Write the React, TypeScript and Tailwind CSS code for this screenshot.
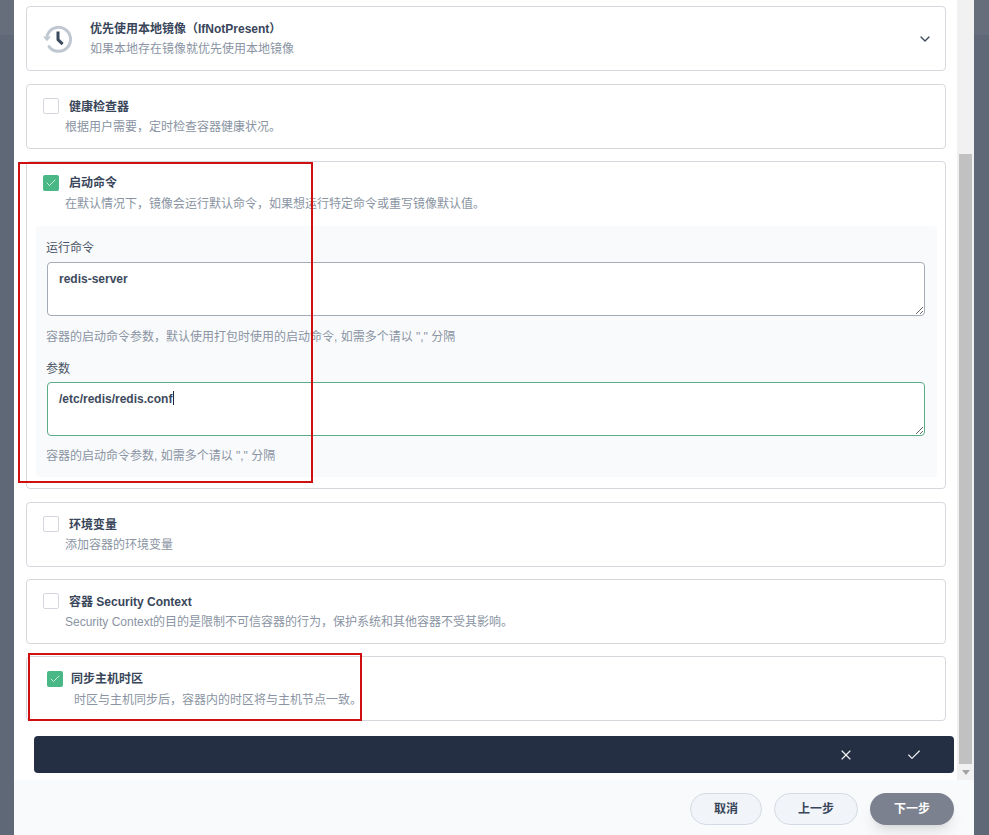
import { Check, ChevronDown, X } from 'lucide-react';

const FONT = "font-['Liberation_Sans','Noto_Sans_CJK_SC',sans-serif]";

const Side = ({ left }: { left?: boolean }) => (
  <div className={`${left ? 'w-[14px]' : 'w-[15px]'} shrink-0 flex flex-col bg-[#5f6876]`}>
    <div className="h-[35px] bg-[#666e7c]" />
  </div>
);

const Checkbox = ({ checked = false }: { checked?: boolean }) =>
  checked ? (
    <span className="w-4 h-4 rounded-[2px] bg-[#4ab886] flex items-center justify-center shrink-0">
      <Check size={12} strokeWidth={1.5} className="text-white" />
    </span>
  ) : (
    <span className="w-4 h-4 rounded-[2px] bg-white border border-[#d4d8de] shrink-0" />
  );

const HistoryIcon = () => (
  <svg width="32" height="32" viewBox="0 0 32 32" fill="none" className="shrink-0">
    <path d="M5.2 12.5A12 12 0 1 1 7 23.6" stroke="#bfc7d1" strokeWidth="3" strokeLinecap="round" />
    <path d="M1 13.5h8l-4 4.8z" fill="#bfc7d1" />
    <path d="M16 8.5v8.2l4.6 4.4" stroke="#3a4a5e" strokeWidth="3" strokeLinejoin="round" />
  </svg>
);

// 勾选卡片：标题 + 说明
const OptionCard = ({ title, desc, checked }: { title: string; desc: string; checked?: boolean }) => (
  <div className="h-[65px] rounded-[4px] border border-[#d5d8dd] bg-white pl-[16px] pt-[13px]">
    <div className="flex items-center gap-[10px] h-4">
      <Checkbox checked={checked} />
      <span className="text-[12px] font-bold text-[#39465a] translate-y-px">{title}</span>
    </div>
    <p className="text-[12px] text-[#8a94a3] mt-[5px] ml-[22px] leading-4">{desc}</p>
  </div>
);

const Field = ({ label, value, hint, active }: { label: string; value: string; hint: string; active?: boolean }) => (
  <div>
    <label className={`block text-[12px] leading-4 text-[#4a5465] ${active ? 'translate-y-px' : ''}`}>{label}</label>
    <div className="relative mt-[6px] ml-px">
      <textarea
        readOnly
        defaultValue={value}
        className={`block w-[878px] h-[54px] rounded-[4px] border bg-white pl-[11px] pr-3 py-[8px] text-[12px] leading-4 font-bold text-[#3d4a5c] outline-none ${FONT} ${active ? 'border-[#5aad88]' : 'border-[#a5abb5]'}`}
      />
      {active && <span className="absolute left-[126px] top-[9px] w-px h-[14px] bg-[#1f2937]" />}
    </div>
    <p className={`text-[12px] leading-4 text-[#8a94a3] mt-[13px] ${active ? '-translate-y-px' : ''}`}>{hint}</p>
  </div>
);

export default function App() {
  return (
    <div className={`relative w-[989px] h-[835px] overflow-hidden flex ${FONT}`}>
      <Side left />
      <div className="flex-1 flex flex-col bg-white min-w-0">
        <div className="h-[780px] flex relative">
          <div className="flex-1 min-w-0 pt-[6px] pl-[12px] pr-[11px] flex flex-col gap-[12.5px]">
            <div className="h-[65px] rounded-[4px] border border-[#d5d8dd] bg-white flex items-center pl-[15px] pr-[12px]">
              <HistoryIcon />
              <div className="ml-[16px] flex-1">
                <p className="text-[12px] leading-4 font-bold text-[#39465a]">优先使用本地镜像（IfNotPresent）</p>
                <p className="text-[12px] leading-4 text-[#8a94a3] mt-[4px]">如果本地存在镜像就优先使用本地镜像</p>
              </div>
              <ChevronDown size={16} strokeWidth={2} className="text-[#3d4a5c]" />
            </div>

            <OptionCard title="健康检查器" desc="根据用户需要，定时检查容器健康状况。" />

            <div className="h-[328px] rounded-[4px] border border-[#d5d8dd] bg-white pt-[13px]">
              <div className="pl-[16px]">
                <div className="flex items-center gap-[10px] h-4">
                  <Checkbox checked />
                  <span className="text-[12px] font-bold text-[#39465a]">启动命令</span>
                </div>
                <p className="text-[12px] text-[#8a94a3] mt-[5px] ml-[22px] leading-4">在默认情况下，镜像会运行默认命令，如果想运行特定命令或重写镜像默认值。</p>
              </div>
              <div className="ml-[9px] mr-[8px] mt-[14px] h-[251px] bg-[#f9fafc] rounded-[4px] pl-[10px] pt-[14px] flex flex-col gap-[15px]">
                <Field label="运行命令" value="redis-server" hint="容器的启动命令参数，默认使用打包时使用的启动命令, 如需多个请以 &quot;,&quot; 分隔" />
                <Field active label="参数" value="/etc/redis/redis.conf" hint="容器的启动命令参数, 如需多个请以 &quot;,&quot; 分隔" />
              </div>
            </div>

            <OptionCard title="环境变量" desc="添加容器的环境变量" />
            <OptionCard title="容器 Security Context" desc="Security Context的目的是限制不可信容器的行为，保护系统和其他容器不受其影响。" />

            <div className="h-[65px] -mt-[0.5px] rounded-[4px] border border-[#d5d8dd] bg-white pl-[20px] pt-[13.5px]">
              <div className="flex items-center gap-[8px] h-4">
                <Checkbox checked />
                <span className="text-[12px] font-bold text-[#39465a]">同步主机时区</span>
              </div>
              <p className="text-[12px] text-[#8a94a3] mt-[5px] ml-[27px] leading-4">时区与主机同步后，容器内的时区将与主机节点一致。</p>
            </div>

            <div className="h-[37px] w-[920px] ml-[8px] mt-[2.5px] shrink-0 rounded-[4px] bg-[#252f43] flex items-center justify-end pr-[32px] gap-[52px] relative">
              <X size={16} strokeWidth={1.75} className="text-[#f1f3f5]" />
              <Check size={16} strokeWidth={1.75} className="text-[#f1f3f5]" />
            </div>
          </div>

          {/* 滚动条 */}
          <div className="w-[17px] shrink-0 bg-[#f1f1f1] flex flex-col px-[2px]">
            <div className="h-[154px]" />
            <div className="h-[610px] bg-[#c1c1c1]" />
            <div className="flex-1 flex items-center justify-center">
              <svg width="8" height="5" viewBox="0 0 8 5"><path d="M0 0h8L4 5z" fill="#a3a3a3" /></svg>
            </div>
          </div>
        </div>

        <div className="flex-1 bg-[#f9fafc] flex items-start justify-end gap-[12px] pt-[13px] pr-[20px]">
          <button className="w-[72px] h-[32px] rounded-full border border-[#d5dbe3] bg-[#f1f5f9] text-[12px] font-bold text-[#39465a]">取消</button>
          <button className="w-[84px] h-[32px] rounded-full border border-[#d5dbe3] bg-[#f1f5f9] text-[12px] font-bold text-[#39465a]">上一步</button>
          <button className="w-[84px] h-[32px] rounded-full bg-[#7c818f] text-[12px] font-bold text-white shadow-lg">下一步</button>
        </div>
      </div>
      <Side />

      {/* 标注红框 */}
      <div className="absolute left-[18px] top-[162px] w-[295px] h-[321px] border-2 border-[#d01010] pointer-events-none" />
      <div className="absolute left-[28px] top-[653px] w-[334px] h-[68px] border-2 border-[#d01010] pointer-events-none" />
    </div>
  );
}
